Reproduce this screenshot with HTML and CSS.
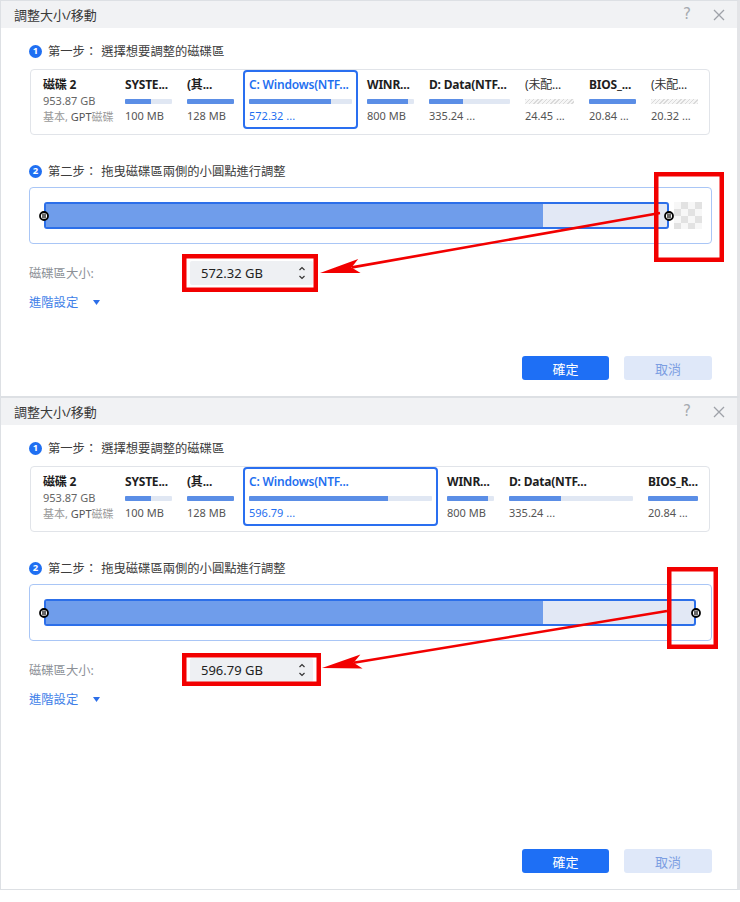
FILE: index.html
```html
<!DOCTYPE html>
<html lang="zh-Hant">
<head>
<meta charset="utf-8">
<title>調整大小/移動</title>
<link rel="stylesheet" href="styles.css">
</head>
<body>
<div class="page">

<section class="dialog d1">
  <header class="titlebar">
    <span class="title">調整大小/移動</span>
    <span class="help">?</span>
    <svg class="close" width="12" height="12" viewBox="0 0 12 12"><path d="M1 1L11 11M11 1L1 11" stroke="#9ea2a8" stroke-width="1.3" fill="none"/></svg>
  </header>
  <div class="body">
    <div class="step"><span class="num">1</span><span class="step-label">第一步：</span><span>選擇想要調整的磁碟區</span></div>
    <div class="parts">
      <div class="part disk">
        <div class="ptitle">磁碟 2</div>
        <div class="dsub">953.87 GB</div>
        <div class="dtype">基本, <b>GPT</b>磁碟</div>
      </div>
      <div class="part w47"><div class="ptitle">SYSTE...</div><div class="pbar"><div class="pfill" style="width:55%"></div></div><div class="psize">100 MB</div></div>
      <div class="part w47"><div class="ptitle">(其...</div><div class="pbar"><div class="pfill" style="width:100%"></div></div><div class="psize">128 MB</div></div>
      <div class="part sel w103"><div class="ptitle">C: Windows(NTF...</div><div class="pbar"><div class="pfill" style="width:80%"></div></div><div class="psize">572.32 ...</div></div>
      <div class="part w47"><div class="ptitle">WINR...</div><div class="pbar"><div class="pfill" style="width:88%"></div></div><div class="psize">800 MB</div></div>
      <div class="part w81"><div class="ptitle">D: Data(NTF...</div><div class="pbar"><div class="pfill" style="width:42%"></div></div><div class="psize">335.24 ...</div></div>
      <div class="part w49"><div class="ptitle light">(未配...</div><div class="pbar unalloc"></div><div class="psize">24.45 ...</div></div>
      <div class="part w47"><div class="ptitle">BIOS_...</div><div class="pbar"><div class="pfill" style="width:100%"></div></div><div class="psize">20.84 ...</div></div>
      <div class="part w47"><div class="ptitle light">(未配...</div><div class="pbar unalloc"></div><div class="psize">20.32 ...</div></div>
    </div>

    <div class="step step2"><span class="num">2</span><span class="step-label">第二步：</span><span>拖曳磁碟區兩側的小圓點進行調整</span></div>
    <div class="track track-free">
      <div class="bar">
        <div class="fill" style="width:80%"></div>
        <svg class="handle hl" width="10" height="10" viewBox="0 0 10 10"><circle cx="5" cy="5" r="4" fill="#fff" stroke="#000" stroke-width="1.8"/><path d="M4 2.4V7.6M6 2.4V7.6" stroke="#000" stroke-width="1.2"/></svg>
        <svg class="handle hr" width="10" height="10" viewBox="0 0 10 10"><circle cx="5" cy="5" r="4" fill="#fff" stroke="#000" stroke-width="1.8"/><path d="M4 2.4V7.6M6 2.4V7.6" stroke="#000" stroke-width="1.2"/></svg>
      </div>
      <div class="checker"></div>
    </div>

    <div class="size-row">
      <span class="size-label">磁碟區大小:</span>
      <div class="spin"><span>572.32 GB</span>
        <svg width="8" height="16" viewBox="0 0 8 16"><path d="M1.5 5L4 2.5L6.5 5M1.5 11L4 13.5L6.5 11" stroke="#333" stroke-width="1.2" fill="none"/></svg>
      </div>
    </div>
    <div class="adv">進階設定 <svg class="tri" width="7" height="5" viewBox="0 0 7 5"><path d="M0 0H7L3.5 5Z" fill="#2c6ee8"/></svg></div>

    <div class="actions">
      <button class="btn ok">確定</button>
      <button class="btn cancel">取消</button>
    </div>
  </div>
  <svg class="annot" width="740" height="397" viewBox="0 0 740 397">
    <rect x="184.25" y="256.25" width="131.5" height="33.5" fill="none" stroke="#f20000" stroke-width="4.5"/>
    <rect x="656.25" y="174.25" width="65.5" height="85.5" fill="none" stroke="#f20000" stroke-width="4.5"/>
    <line x1="660" y1="213" x2="352" y2="267.4" stroke="#f20000" stroke-width="2.6"/>
    <polygon points="320,273 358.2,259.1 351.5,267.4 360.6,272.9" fill="#f20000"/>
  </svg>
</section>

<section class="dialog d2">
  <header class="titlebar">
    <span class="title">調整大小/移動</span>
    <span class="help">?</span>
    <svg class="close" width="12" height="12" viewBox="0 0 12 12"><path d="M1 1L11 11M11 1L1 11" stroke="#9ea2a8" stroke-width="1.3" fill="none"/></svg>
  </header>
  <div class="body">
    <div class="step"><span class="num">1</span><span class="step-label">第一步：</span><span>選擇想要調整的磁碟區</span></div>
    <div class="parts">
      <div class="part disk">
        <div class="ptitle">磁碟 2</div>
        <div class="dsub">953.87 GB</div>
        <div class="dtype">基本, <b>GPT</b>磁碟</div>
      </div>
      <div class="part w47"><div class="ptitle">SYSTE...</div><div class="pbar"><div class="pfill" style="width:55%"></div></div><div class="psize">100 MB</div></div>
      <div class="part w47"><div class="ptitle">(其...</div><div class="pbar"><div class="pfill" style="width:100%"></div></div><div class="psize">128 MB</div></div>
      <div class="part sel w183"><div class="ptitle">C: Windows(NTF...</div><div class="pbar"><div class="pfill" style="width:76%"></div></div><div class="psize">596.79 ...</div></div>
      <div class="part w47"><div class="ptitle">WINR...</div><div class="pbar"><div class="pfill" style="width:88%"></div></div><div class="psize">800 MB</div></div>
      <div class="part w124"><div class="ptitle">D: Data(NTF...</div><div class="pbar"><div class="pfill" style="width:42%"></div></div><div class="psize">335.24 ...</div></div>
      <div class="part w50"><div class="ptitle">BIOS_R...</div><div class="pbar"><div class="pfill" style="width:100%"></div></div><div class="psize">20.84 ...</div></div>
    </div>

    <div class="step step2"><span class="num">2</span><span class="step-label">第二步：</span><span>拖曳磁碟區兩側的小圓點進行調整</span></div>
    <div class="track track-full">
      <div class="bar">
        <div class="fill" style="width:76.7%"></div>
        <svg class="handle hl" width="10" height="10" viewBox="0 0 10 10"><circle cx="5" cy="5" r="4" fill="#fff" stroke="#000" stroke-width="1.8"/><path d="M4 2.4V7.6M6 2.4V7.6" stroke="#000" stroke-width="1.2"/></svg>
        <svg class="handle hr" width="10" height="10" viewBox="0 0 10 10"><circle cx="5" cy="5" r="4" fill="#fff" stroke="#000" stroke-width="1.8"/><path d="M4 2.4V7.6M6 2.4V7.6" stroke="#000" stroke-width="1.2"/></svg>
      </div>
    </div>

    <div class="size-row">
      <span class="size-label">磁碟區大小:</span>
      <div class="spin"><span>596.79 GB</span>
        <svg width="8" height="16" viewBox="0 0 8 16"><path d="M1.5 5L4 2.5L6.5 5M1.5 11L4 13.5L6.5 11" stroke="#333" stroke-width="1.2" fill="none"/></svg>
      </div>
    </div>
    <div class="adv">進階設定 <svg class="tri" width="7" height="5" viewBox="0 0 7 5"><path d="M0 0H7L3.5 5Z" fill="#2c6ee8"/></svg></div>

    <div class="actions">
      <button class="btn ok">確定</button>
      <button class="btn cancel">取消</button>
    </div>
  </div>
  <svg class="annot" width="740" height="493" viewBox="0 0 740 493">
    <rect x="184.25" y="258.25" width="134.5" height="28.5" fill="none" stroke="#f20000" stroke-width="4.5"/>
    <rect x="669.25" y="172.25" width="46.5" height="77.5" fill="none" stroke="#f20000" stroke-width="4.5"/>
    <line x1="667" y1="214" x2="353.6" y2="265.8" stroke="#f20000" stroke-width="2.6"/>
    <polygon points="322,271 360.4,257.6 353.6,265.8 362.6,271.4" fill="#f20000"/>
  </svg>
</section>

</div>
</body>
</html>
```

FILE: styles.css
```css
* { box-sizing: border-box; }

body {
  margin: 0;
  background: #fff;
  font-family: "Noto Sans", "Noto Sans CJK TC", sans-serif;
  color: #333;
}

.dialog {
  position: relative;
  width: 740px;
  display: flex;
  flex-direction: column;
  background: #fff;
  border: 1px solid #dde0e4;
  border-right: 3px solid #e3e4e7;
}
.d1 { height: 397px; }
.d2 { height: 493px; }

.titlebar {
  height: 27px;
  flex: none;
  background: #f1f2f4;
  display: flex;
  align-items: center;
  padding: 0 12px 0 13px;
}
.title {
  flex: 1;
  font-size: 13px;
  color: #3a3a3a;
}
.help {
  font-family: "DejaVu Sans", sans-serif;
  font-size: 15px;
  color: #a6aaaf;
  margin-right: 22px;
  line-height: 1;
}

.body {
  flex: 1;
  display: flex;
  flex-direction: column;
  padding: 15px 25px 16px 28px;
}

.step {
  height: 16px;
  display: flex;
  align-items: center;
  font-size: 12.3px;
  color: #3c3c3c;
  white-space: nowrap;
}
.step2 { margin-top: 28px; }
.num {
  width: 13px;
  height: 13px;
  border-radius: 50%;
  background: #1f6ff2;
  color: #fff;
  font-size: 9.5px;
  font-weight: 700;
  display: flex;
  align-items: center;
  justify-content: center;
  margin-right: 6px;
  line-height: 1;
}
.step-label { margin-right: 4px; }

.parts {
  margin: 10px 2px 0 1px;
  display: flex;
  gap: 3px;
  border: 1px solid #e1e4e9;
  border-radius: 4px;
  padding: 0 6px 5px;
}
.part {
  flex: none;
  border: 2px solid transparent;
  border-radius: 4px;
  padding: 4px 4px 2px;
  display: flex;
  flex-direction: column;
  white-space: nowrap;
}
.part.disk { width: 79px; }
.w47 { width: 59px; }
.w49 { width: 61px; }
.w50 { width: 62px; }
.w81 { width: 93px; }
.w103 { width: 115px; }
.w124 { width: 136px; }
.w183 { width: 195px; }

.part.sel { border-color: #2a6ff0; }

.ptitle {
  font-size: 12px;
  font-weight: 700;
  line-height: 17px;
  color: #1e1e1e;
  letter-spacing: -0.2px;
}
.ptitle.light { font-weight: 400; color: #333; }
.sel .ptitle { color: #1f6ff0; font-weight: 600; }

.pbar {
  margin-top: 6px;
  height: 5px;
  background: #e0e7f3;
  border-radius: 1px;
  overflow: hidden;
}
.pfill {
  height: 100%;
  background: #5b8ee6;
}
.pbar.unalloc {
  background: repeating-linear-gradient(135deg, #dadada 0 1px, #f6f6f6 1px 3px);
}
.psize {
  margin-top: 4px;
  font-size: 11px;
  line-height: 16px;
  color: #555;
}
.sel .psize { color: #1f6ff0; }

.dsub {
  font-size: 11px;
  line-height: 15px;
  color: #666;
}
.dtype {
  font-size: 11px;
  line-height: 16px;
  color: #9a9a9a;
  margin-top: 1px;
}
.dtype b { font-weight: 400; color: #555; }

.track {
  margin-top: 8px;
  display: flex;
  border: 1px solid #a9c6f6;
  border-radius: 4px;
  padding: 14px 9px 14px 14px;
}
.track-full { padding-right: 15px; }
.bar {
  flex: 1;
  position: relative;
  height: 27px;
  border: 2px solid #2c6fe9;
  border-radius: 3px;
  background: #e2e8f5;
}
.fill {
  height: 100%;
  background: #6f9deb;
}
.handle {
  position: absolute;
  top: 50%;
  margin-top: -5px;
}
.hl { left: -7px; }
.hr { right: -7px; }
.checker {
  flex: none;
  width: 28px;
  height: 27px;
  margin-left: 5px;
  background: conic-gradient(#e2e2e2 25%, #f7f7f7 0 50%, #e2e2e2 0 75%, #f7f7f7 0) 0 0 / 14px 14px;
}

.size-row {
  margin-top: 17px;
  display: flex;
  align-items: center;
}
.size-label {
  width: 161px;
  font-size: 12.3px;
  color: #8c9097;
}
.spin {
  width: 123px;
  height: 24px;
  background: #eef0f3;
  border-radius: 2px;
  padding: 0 7px 0 11px;
  display: flex;
  align-items: center;
  justify-content: space-between;
  font-size: 13px;
  color: #222;
}

.adv {
  margin-top: 9px;
  height: 16px;
  display: flex;
  align-items: center;
  font-size: 12.3px;
  color: #3d7ee8;
}
.tri { margin-left: 15px; }

.actions {
  margin-top: auto;
  display: flex;
  justify-content: flex-end;
  gap: 15px;
}
.btn {
  width: 87px;
  height: 24px;
  border: none;
  border-radius: 3px;
  font-family: "Noto Sans CJK TC", sans-serif;
  font-size: 13px;
  padding: 0;
}
.ok { background: #1e6ff5; color: #fff; }
.cancel { background: #dfe8f9; color: #7c9ee2; width: 88px; }

.annot {
  position: absolute;
  left: -1px;
  top: -1px;
  pointer-events: none;
  overflow: visible;
}
```
